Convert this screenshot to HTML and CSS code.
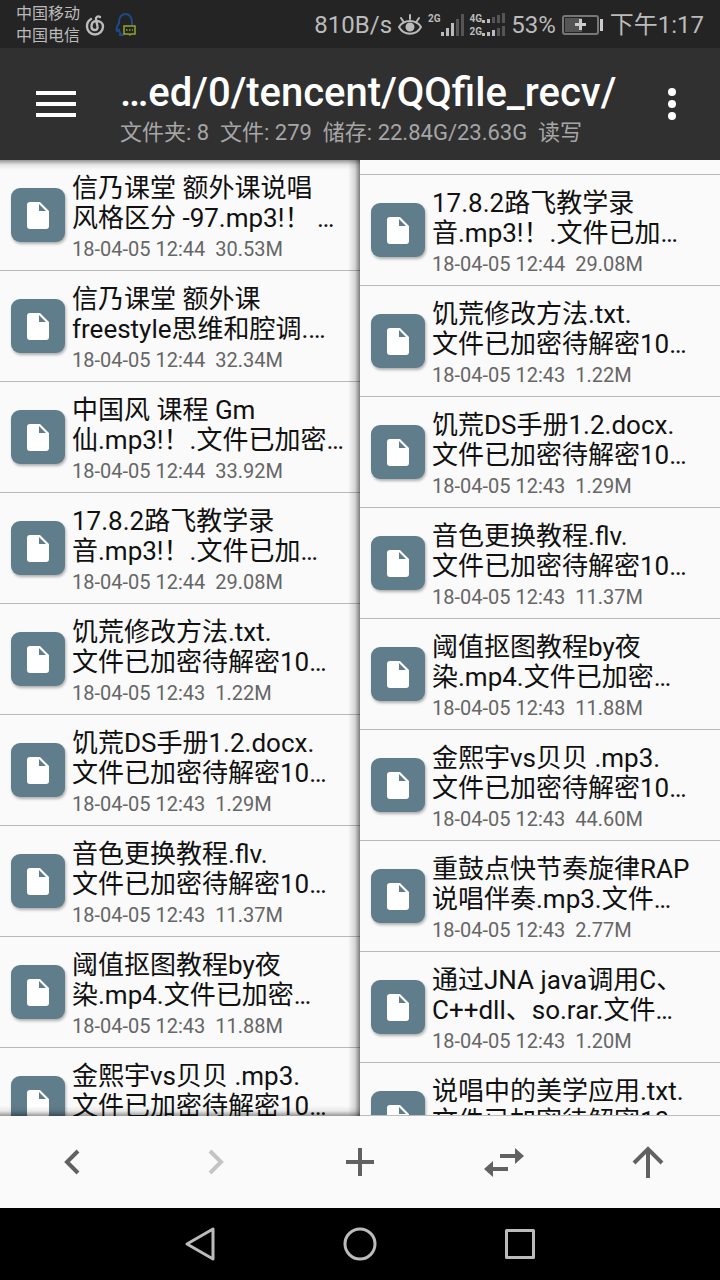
FILE: index.html
```html
<!DOCTYPE html>
<html lang="zh-CN">
<head>
    <meta charset="UTF-8">
    <meta name="viewport" content="width=device-width, initial-scale=1.0">
    <title>QQfile_recv</title>
    <link rel="stylesheet" href="styles.css">
</head>
<body>
    <svg class="defs" width="0" height="0" aria-hidden="true">
        <symbol id="file" viewBox="0 0 54 54">
            <path fill="#fff" fill-rule="evenodd" d="M19 14h10l9 9v15a3 3 0 0 1-3 3H19a3 3 0 0 1-3-3V17a3 3 0 0 1 3-3zm9 2v7h7z"/>
        </symbol>
    </svg>

    <div class="status-bar">
        <div class="carriers">
            <span>中国移动</span>
            <span>中国电信</span>
        </div>
        <svg class="status-music" width="20" height="22" viewBox="0 0 20 22" fill="none" stroke="#bbb" stroke-width="2.4" stroke-linecap="round">
            <path d="M6 5a8.500 8.500 0 0 0-4 7.500 8 8 0 0 0 16 0c0-3.500-3-5.500-6.500-5.500S6.500 9.500 6.500 12.500c0 2 1.300 3.500 3.300 3.500s3.200-1.700 2.700-3.500L11 5.500c-.5-2.500 2-4 4-2.500"/>
        </svg>
        <svg class="status-qq" width="22" height="24" viewBox="0 0 22 24" fill="none">
            <path stroke="#1c4a8c" stroke-width="2" d="M4 11V9c0-5 3-8 6.500-8S17 4 17 9v3M4 10c-2 3-3 6-2 8l2-1c0 2 1 3 2 4l-2 1h5"/>
            <path stroke="#95a52b" stroke-width="1.500" d="M9 13h11v8h-4l-1 1-1-1H9z"/>
            <path stroke="#95a52b" stroke-width="1.500" stroke-dasharray="1.500 1.500" d="M11 17h7"/>
        </svg>

        <div class="status-right">
            <span>810B/s</span>
            <svg width="24" height="22" viewBox="0 0 24 22" fill="none" stroke="#bbb" stroke-width="2" stroke-linecap="round">
                <path d="M1 13c5-8 17-8 22 0-5 9-17 9-22 0zM12 5V1M5 7L3 4M19 7l2-3"/>
                <circle cx="12" cy="13" r="3.500" fill="#bbb"/>
            </svg>
            <div class="signal">
                <small>2G</small>
                <svg width="23" height="24" viewBox="0 0 23 24">
                    <path fill="#bbb" d="M0 19h3v4H0zM5 15h3v8H5zM10 10h3v13h-3z"/>
                    <path fill="#555" d="M15 6h3v17h-3zM20 1h3v22h-3z"/>
                </svg>
            </div>
            <div class="signal-dual">
                <small>4G</small>
                <svg width="23" height="11" viewBox="0 0 23 11">
                    <path fill="#bbb" d="M0 7h3v3H0zM5 6h3v4H5z"/>
                    <path fill="#555" d="M10 4h3v6h-3zM15 2h3v8h-3zM20 0h3v10h-3z"/>
                </svg>
                <small>2G</small>
                <svg width="23" height="11" viewBox="0 0 23 11">
                    <path fill="#bbb" d="M0 7h3v3H0zM5 6h3v4H5zM10 4h3v6h-3z"/>
                    <path fill="#555" d="M15 2h3v8h-3zM20 0h3v10h-3z"/>
                </svg>
            </div>
            <span>53%</span>
            <svg width="42" height="20" viewBox="0 0 42 20">
                <rect x="1" y="1" width="35" height="18" rx="2" fill="none" stroke="#777" stroke-width="2"/>
                <path fill="#555" d="M3 3h17v14H3z"/>
                <path fill="#ccc" d="M17 4h3v4h4v3h-4v4h-3v-4h-4V8h4zM38 4h3v12h-3z"/>
            </svg>
            <span>下午1:17</span>
        </div>
    </div>

    <header class="header">
        <button class="icon-button menu" aria-label="菜单">
            <svg width="40" height="28" viewBox="0 0 40 28" fill="#fff">
                <path d="M0 1h40v4H0zM0 12h40v4H0zM0 23h40v4H0z"/>
            </svg>
        </button>
        <div class="header-text">
            <h1>…ed/0/tencent/QQfile_recv/</h1>
            <p>文件夹: 8  文件: 279  储存: 22.84G/23.63G  读写</p>
        </div>
        <button class="icon-button more" aria-label="更多">
            <svg width="8" height="32" viewBox="0 0 8 32" fill="#fff">
                <circle cx="4" cy="4" r="4"/><circle cx="4" cy="16" r="4"/><circle cx="4" cy="28" r="4"/>
            </svg>
        </button>
    </header>

    <main class="panes">
        <section class="pane pane-left">
            <ul class="file-list">
                <li><a href="#"><svg class="file-icon"><use href="#file"/></svg><div class="file-info"><h2>信乃课堂 额外课说唱<br>风格区分 -97.mp3!！ …</h2><p>18-04-05 12:44  30.53M</p></div></a></li>
                <li><a href="#"><svg class="file-icon"><use href="#file"/></svg><div class="file-info"><h2>信乃课堂 额外课<br>freestyle思维和腔调.…</h2><p>18-04-05 12:44  32.34M</p></div></a></li>
                <li><a href="#"><svg class="file-icon"><use href="#file"/></svg><div class="file-info"><h2>中国风 课程 Gm<br>仙.mp3!！.文件已加密…</h2><p>18-04-05 12:44  33.92M</p></div></a></li>
                <li><a href="#"><svg class="file-icon"><use href="#file"/></svg><div class="file-info"><h2>17.8.2路飞教学录<br>音.mp3!！.文件已加…</h2><p>18-04-05 12:44  29.08M</p></div></a></li>
                <li><a href="#"><svg class="file-icon"><use href="#file"/></svg><div class="file-info"><h2>饥荒修改方法.txt.<br>文件已加密待解密10…</h2><p>18-04-05 12:43  1.22M</p></div></a></li>
                <li><a href="#"><svg class="file-icon"><use href="#file"/></svg><div class="file-info"><h2>饥荒DS手册1.2.docx.<br>文件已加密待解密10…</h2><p>18-04-05 12:43  1.29M</p></div></a></li>
                <li><a href="#"><svg class="file-icon"><use href="#file"/></svg><div class="file-info"><h2>音色更换教程.flv.<br>文件已加密待解密10…</h2><p>18-04-05 12:43  11.37M</p></div></a></li>
                <li><a href="#"><svg class="file-icon"><use href="#file"/></svg><div class="file-info"><h2>阈值抠图教程by夜<br>染.mp4.文件已加密…</h2><p>18-04-05 12:43  11.88M</p></div></a></li>
                <li><a href="#"><svg class="file-icon"><use href="#file"/></svg><div class="file-info"><h2>金熙宇vs贝贝 .mp3.<br>文件已加密待解密10…</h2><p>18-04-05 12:43  44.60M</p></div></a></li>
            </ul>
        </section>
        <section class="pane pane-right">
            <ul class="file-list scrolled">
                <li><a href="#"><svg class="file-icon"><use href="#file"/></svg><div class="file-info"><h2>中国风 课程 Gm<br>仙.mp3!！.文件已加密…</h2><p>18-04-05 12:44  33.92M</p></div></a></li>
                <li><a href="#"><svg class="file-icon"><use href="#file"/></svg><div class="file-info"><h2>17.8.2路飞教学录<br>音.mp3!！.文件已加…</h2><p>18-04-05 12:44  29.08M</p></div></a></li>
                <li><a href="#"><svg class="file-icon"><use href="#file"/></svg><div class="file-info"><h2>饥荒修改方法.txt.<br>文件已加密待解密10…</h2><p>18-04-05 12:43  1.22M</p></div></a></li>
                <li><a href="#"><svg class="file-icon"><use href="#file"/></svg><div class="file-info"><h2>饥荒DS手册1.2.docx.<br>文件已加密待解密10…</h2><p>18-04-05 12:43  1.29M</p></div></a></li>
                <li><a href="#"><svg class="file-icon"><use href="#file"/></svg><div class="file-info"><h2>音色更换教程.flv.<br>文件已加密待解密10…</h2><p>18-04-05 12:43  11.37M</p></div></a></li>
                <li><a href="#"><svg class="file-icon"><use href="#file"/></svg><div class="file-info"><h2>阈值抠图教程by夜<br>染.mp4.文件已加密…</h2><p>18-04-05 12:43  11.88M</p></div></a></li>
                <li><a href="#"><svg class="file-icon"><use href="#file"/></svg><div class="file-info"><h2>金熙宇vs贝贝 .mp3.<br>文件已加密待解密10…</h2><p>18-04-05 12:43  44.60M</p></div></a></li>
                <li><a href="#"><svg class="file-icon"><use href="#file"/></svg><div class="file-info"><h2>重鼓点快节奏旋律RAP<br>说唱伴奏.mp3.文件…</h2><p>18-04-05 12:43  2.77M</p></div></a></li>
                <li><a href="#"><svg class="file-icon"><use href="#file"/></svg><div class="file-info"><h2>通过JNA java调用C、<br>C++dll、so.rar.文件…</h2><p>18-04-05 12:43  1.20M</p></div></a></li>
                <li><a href="#"><svg class="file-icon"><use href="#file"/></svg><div class="file-info"><h2>说唱中的美学应用.txt.<br>文件已加密待解密10…</h2><p>18-04-05 12:43</p></div></a></li>
            </ul>
        </section>
    </main>

    <div class="toolbar">
        <button class="icon-button" aria-label="后退">
            <svg width="48" height="48" viewBox="0 0 48 48" fill="none" stroke="#616161" stroke-width="4"><path d="M30 13L19 24l11 11"/></svg>
        </button>
        <button class="icon-button" aria-label="前进" disabled>
            <svg width="48" height="48" viewBox="0 0 48 48" fill="none" stroke="#c4c4c4" stroke-width="4"><path d="M18 13l11 11-11 11"/></svg>
        </button>
        <button class="icon-button" aria-label="新建">
            <svg width="48" height="48" viewBox="0 0 48 48" fill="none" stroke="#616161" stroke-width="4"><path d="M10 24h28M24 10v28"/></svg>
        </button>
        <button class="icon-button" aria-label="交换">
            <svg width="48" height="48" viewBox="0 0 48 48" fill="#616161"><path d="M20 16h15v-6l9 8-9 8v-6H20zM28 33H13v6l-9-8 9-8v6h15z"/></svg>
        </button>
        <button class="icon-button" aria-label="上级目录">
            <svg width="48" height="48" viewBox="0 0 48 48" fill="none" stroke="#616161" stroke-width="4"><path d="M24 40V12M10 25l14-14 14 14"/></svg>
        </button>
    </div>

    <nav class="nav-bar">
        <button class="icon-button" aria-label="返回">
            <svg width="36" height="36" viewBox="0 0 36 36" fill="none" stroke="#bbb" stroke-width="3" stroke-linejoin="round"><path d="M31 3v30L5 18z"/></svg>
        </button>
        <button class="icon-button" aria-label="主页">
            <svg width="36" height="36" viewBox="0 0 36 36" fill="none" stroke="#bbb" stroke-width="3"><circle cx="18" cy="18" r="15"/></svg>
        </button>
        <button class="icon-button" aria-label="最近任务">
            <svg width="36" height="36" viewBox="0 0 36 36" fill="none" stroke="#bbb" stroke-width="3" stroke-linejoin="round"><path d="M4.500 4.500h27v27h-27z"/></svg>
        </button>
    </nav>
</body>
</html>
```
FILE: styles.css
```css
* {
    box-sizing: border-box;
}
body {
    margin: 0;
    height: 100vh;
    display: flex;
    flex-direction: column;
    overflow: hidden;
    font-family: Roboto, 'Noto Sans CJK SC', sans-serif;
    background-color: #fafafa;
}
h1, h2, p, ul {
    margin: 0;
    padding: 0;
    font-weight: normal;
}
svg {
    display: block;
    flex-shrink: 0;
}
.defs {
    position: absolute;
}
.icon-button {
    display: flex;
    align-items: center;
    justify-content: center;
    padding: 0;
    border: none;
    background: none;
    cursor: pointer;
}

/* status bar */
.status-bar {
    display: flex;
    align-items: center;
    flex-shrink: 0;
    height: 48px;
    padding: 2px 16px 0;
    background-color: #242424;
    color: #bbb;
}
.carriers {
    display: flex;
    flex-direction: column;
    font-size: 16px;
    line-height: 22px;
}
.status-music {
    margin-left: 5px;
}
.status-qq {
    margin-left: 10px;
}
.status-right {
    display: flex;
    align-items: center;
    gap: 6px;
    margin-left: auto;
    font-size: 24px;
    line-height: 28px;
}
.status-right small {
    font-size: 10px;
    font-weight: bold;
    line-height: 12px;
}
.signal {
    display: flex;
    align-items: flex-start;
}
.signal-dual {
    display: grid;
    grid-template-columns: auto auto;
    row-gap: 1px;
}

/* header */
.header {
    display: flex;
    align-items: center;
    flex-shrink: 0;
    height: 112px;
    background-color: #303030;
    color: #fff;
}
.menu {
    width: 112px;
    height: 112px;
}
.more {
    width: 96px;
    height: 112px;
}
.header-text {
    flex: 1;
    min-width: 0;
    padding: 10px 0 0 8px;
}
.header h1 {
    font-size: 40px;
    font-weight: 500;
    line-height: 48px;
    white-space: nowrap;
}
.header p {
    font-size: 22px;
    line-height: 32px;
    color: #a6a6a6;
    white-space: pre;
}

/* file panes */
.panes {
    display: grid;
    grid-template-columns: 1fr 1fr;
    flex: 1;
    min-height: 0;
}
.pane {
    position: relative;
    min-width: 0;
    overflow: hidden;
}
.pane-left::after {
    content: '';
    position: absolute;
    inset: 0;
    pointer-events: none;
    background:
        linear-gradient(to left, rgba(0, 0, 0, 0.5), rgba(0, 0, 0, 0.15) 5px, transparent 12px),
        linear-gradient(to bottom, rgba(0, 0, 0, 0.4), rgba(0, 0, 0, 0.08) 5px, transparent 10px),
        linear-gradient(to top, rgba(0, 0, 0, 0.4), rgba(0, 0, 0, 0.08) 5px, transparent 10px);
}
.pane-right {
    border-bottom: 1px solid #bbb;
}
.file-list {
    list-style: none;
}
.scrolled {
    margin-top: -96px;
}
.file-list li {
    border-bottom: 1px solid #b8b8b8;
}
.file-list a {
    display: flex;
    align-items: center;
    gap: 7px;
    height: 110px;
    padding-left: 11px;
    color: #111;
    text-decoration: none;
}
.file-icon {
    width: 54px;
    height: 54px;
    border-radius: 9px;
    background-color: #607d8b;
    box-shadow: 1px 2px 3px rgba(0, 0, 0, 0.3);
}
.file-info {
    min-width: 0;
    padding-top: 8px;
    white-space: pre;
}
.file-info h2 {
    font-size: 26px;
    line-height: 30px;
}
.file-info p {
    font-size: 20px;
    line-height: 32px;
    color: #666;
}

/* bottom bars */
.toolbar {
    display: grid;
    grid-template-columns: repeat(5, 1fr);
    flex-shrink: 0;
    height: 92px;
    background-color: #fafafa;
}
.nav-bar {
    display: flex;
    align-items: center;
    justify-content: center;
    gap: 124px;
    flex-shrink: 0;
    height: 72px;
    background-color: #000;
}
```
